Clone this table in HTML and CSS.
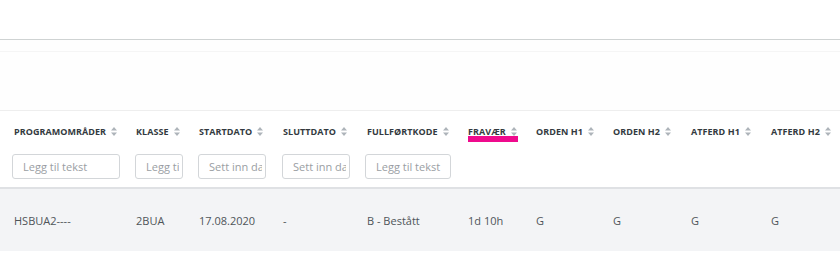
FILE: index.html
```html
<!DOCTYPE html>
<html lang="no">
<head>
<meta charset="utf-8">
<title>Elevoversikt</title>
<link rel="stylesheet" href="styles.css">
</head>
<body>
<div class="topbar"></div>
<div class="subbar"></div>
<div class="spacer"></div>
<table class="grid">
  <colgroup>
    <col class="c1"><col class="c2"><col class="c3"><col class="c4"><col class="c5">
    <col class="c6"><col class="c7"><col class="c8"><col class="c9"><col class="c10">
  </colgroup>
  <thead>
    <tr class="head">
      <th>PROGRAMOMRÅDER<svg class="sort" viewBox="0 0 6 9" width="6" height="9"><path d="M3 0L6 3.6H0Z M3 9L0 5.4H6Z"/></svg></th>
      <th>KLASSE<svg class="sort" viewBox="0 0 6 9" width="6" height="9"><path d="M3 0L6 3.6H0Z M3 9L0 5.4H6Z"/></svg></th>
      <th>STARTDATO<svg class="sort" viewBox="0 0 6 9" width="6" height="9"><path d="M3 0L6 3.6H0Z M3 9L0 5.4H6Z"/></svg></th>
      <th>SLUTTDATO<svg class="sort" viewBox="0 0 6 9" width="6" height="9"><path d="M3 0L6 3.6H0Z M3 9L0 5.4H6Z"/></svg></th>
      <th>FULLFØRTKODE<svg class="sort" viewBox="0 0 6 9" width="6" height="9"><path d="M3 0L6 3.6H0Z M3 9L0 5.4H6Z"/></svg></th>
      <th><span class="mark">FRAVÆR<svg class="sort" viewBox="0 0 6 9" width="6" height="9"><path d="M3 0L6 3.6H0Z M3 9L0 5.4H6Z"/></svg></span></th>
      <th>ORDEN H1<svg class="sort" viewBox="0 0 6 9" width="6" height="9"><path d="M3 0L6 3.6H0Z M3 9L0 5.4H6Z"/></svg></th>
      <th>ORDEN H2<svg class="sort" viewBox="0 0 6 9" width="6" height="9"><path d="M3 0L6 3.6H0Z M3 9L0 5.4H6Z"/></svg></th>
      <th>ATFERD H1<svg class="sort" viewBox="0 0 6 9" width="6" height="9"><path d="M3 0L6 3.6H0Z M3 9L0 5.4H6Z"/></svg></th>
      <th>ATFERD H2<svg class="sort" viewBox="0 0 6 9" width="6" height="9"><path d="M3 0L6 3.6H0Z M3 9L0 5.4H6Z"/></svg></th>
    </tr>
    <tr class="filters">
      <th><input class="f w1" type="text" placeholder="Legg til tekst"></th>
      <th class="nudge"><input class="f w2" type="text" placeholder="Legg til tekst"></th>
      <th class="nudge"><input class="f w3" type="text" placeholder="Sett inn dato"></th>
      <th class="nudge"><input class="f w3" type="text" placeholder="Sett inn dato"></th>
      <th><input class="f w5" type="text" placeholder="Legg til tekst"></th>
      <th></th><th></th><th></th><th></th><th></th>
    </tr>
  </thead>
  <tbody>
    <tr class="row">
      <td>HSBUA2----</td>
      <td>2BUA</td>
      <td>17.08.2020</td>
      <td>-</td>
      <td>B - Bestått</td>
      <td>1d 10h</td>
      <td>G</td>
      <td>G</td>
      <td>G</td>
      <td>G</td>
    </tr>
  </tbody>
</table>
</body>
</html>
```
FILE: styles.css
```css
html, body {
  margin: 0;
  background: #ffffff;
  font-family: "Open Sans", "Liberation Sans", sans-serif;
}

.topbar {
  height: 39px;
  border-bottom: 1px solid #cfd3d3;
  background: #ffffff;
}

.subbar {
  height: 11px;
  border-bottom: 1px solid #f5f5f5;
  background: #fefefe;
}

.spacer {
  height: 58px;
  border-bottom: 1px solid #eeeeee;
  background: #fefefe;
}

.grid {
  border-collapse: collapse;
  table-layout: fixed;
  width: 840px;
}

.c1 { width: 122px; }
.c2 { width: 63px; }
.c3 { width: 84px; }
.c4 { width: 84px; }
.c5 { width: 101px; }
.c6 { width: 68px; }
.c7 { width: 77px; }
.c8 { width: 78px; }
.c9 { width: 80px; }
.c10 { width: 83px; }

.head th {
  text-align: left;
  font-weight: 700;
  font-size: 9px;
  letter-spacing: 0.05px;
  line-height: 12px;
  color: #333a40;
  padding: 15px 0 8px 14px;
  white-space: nowrap;
}

.sort {
  fill: #aeb4ba;
  margin-left: 5px;
  vertical-align: -1px;
}

.mark {
  position: relative;
  display: inline-block;
}

.mark::after {
  content: "";
  position: absolute;
  left: 0;
  top: 10px;
  width: 50px;
  height: 6px;
  background: #ef0a8d;
}

.filters th {
  text-align: left;
  padding: 8px 0 8px 12px;
  border-bottom: 2px solid #dfe1e4;
}

.filters th.nudge {
  padding-left: 13px;
}

.f {
  display: block;
  box-sizing: border-box;
  height: 25px;
  border: 1px solid #d3d6d9;
  border-radius: 3px;
  padding: 0 3px 0 10px;
  font-family: "Open Sans", "Liberation Sans", sans-serif;
  font-size: 11px;
  color: #555;
  background: #fff;
  outline: none;
}

.f::placeholder {
  color: #9a9ea3;
}

.w1 { width: 108px; }
.w2 { width: 48px; }
.w3 { width: 68px; }
.w5 { width: 86px; }

.row td {
  background: #f3f4f6;
  height: 63px;
  box-sizing: border-box;
  padding: 0 0 0 14px;
  font-size: 11px;
  color: #4f5459;
  vertical-align: middle;
  white-space: nowrap;
}
```
